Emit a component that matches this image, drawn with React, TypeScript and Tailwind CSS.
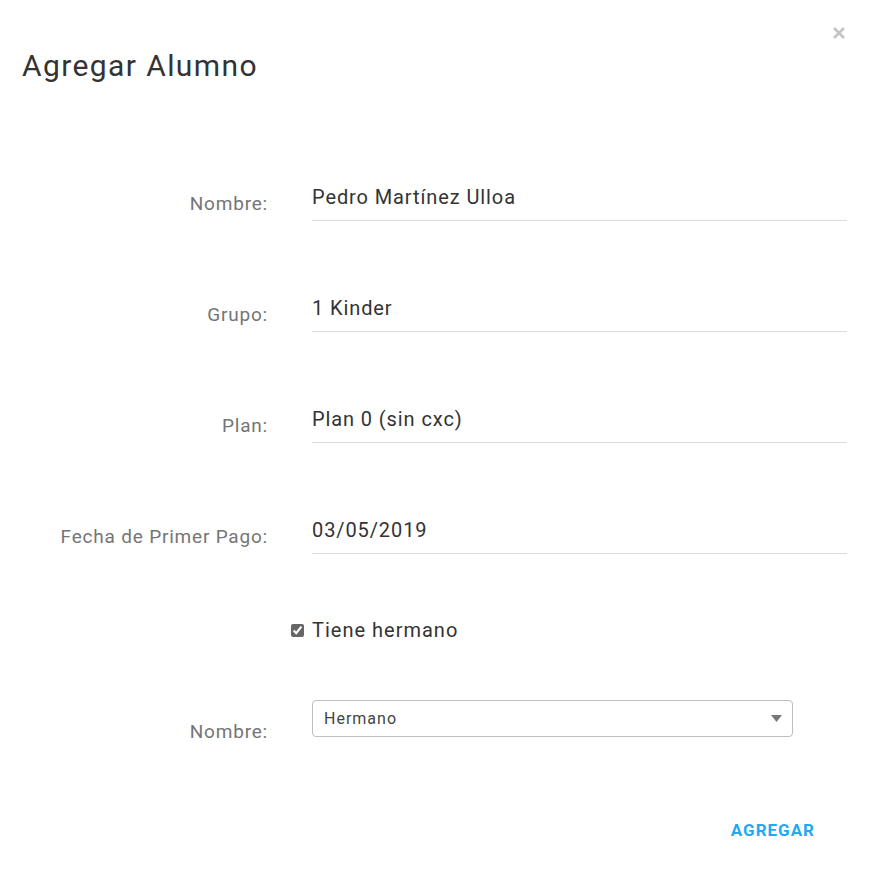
import React from 'react';

const fields = [
  { label: 'Nombre:', value: 'Pedro Martínez Ulloa' },
  { label: 'Grupo:', value: '1 Kinder' },
  { label: 'Plan:', value: 'Plan 0 (sin cxc)' },
  { label: 'Fecha de Primer Pago:', value: '03/05/2019' },
];

function Field({ label, value, first }: { label: string; value: string; first?: boolean }) {
  return (
    <div className={`flex ${first ? '' : 'mt-[64px]'}`}>
      <div className="w-[268px] shrink-0 pt-[18px] text-right text-[19px] leading-[24px] tracking-[0.8px] text-[#757575]">
        {label}
      </div>
      <div className="ml-[44px] flex-1 h-[47px] border-b border-[#dcdcdc] pt-[9px] text-[20px] leading-[28px] tracking-[0.9px] text-[#333]">
        {value}
      </div>
    </div>
  );
}

export default function App() {
  return (
    <div
      className="relative w-[873px] h-[869px] bg-white pr-[26px]"
      style={{ fontFamily: 'Roboto, "Liberation Sans", sans-serif' }}
    >
      {/* close */}
      <button className="absolute top-[26px] right-[27px] text-[#c4c4c4]">
        <svg width="14" height="14" viewBox="0 0 14 14">
          <path d="M2 2 L12 12 M12 2 L2 12" stroke="currentColor" strokeWidth="2.6" />
        </svg>
      </button>

      <h1 className="pl-[22px] pt-[46px] text-[30px] leading-[40px] tracking-[1.4px] text-[#333]">Agregar Alumno</h1>

      <div className="mt-[88px]">
        {fields.map((f, i) => (
          <Field key={i} label={f.label} value={f.value} first={i === 0} />
        ))}
      </div>

      <div className="mt-[62px] flex items-center pl-[291px] text-[20px] leading-[28px] tracking-[1px] text-[#333]">
        <input type="checkbox" defaultChecked className="w-[13px] h-[13px] mr-[8px] accent-[#666]" />
        <span>Tiene hermano</span>
      </div>

      <div className="mt-[56px] flex">
        <div className="w-[268px] shrink-0 pt-[20px] text-right text-[19px] leading-[24px] tracking-[0.8px] text-[#757575]">
          Nombre:
        </div>
        <div className="ml-[44px] w-[481px] h-[37px] flex items-center justify-between border border-[#bdbdbd] rounded-[4px] pl-[11px] pr-[10px] text-[16px] tracking-[1px] text-[#444]">
          <span>Hermano</span>
          <svg width="11" height="7" viewBox="0 0 11 7">
            <path d="M0 0 L11 0 L5.5 7 Z" fill="#777" />
          </svg>
        </div>
      </div>

      <div className="mt-[74px] flex justify-end pr-[32px]">
        <button className="text-[17px] leading-[24px] font-bold text-[#1eaaf1] tracking-[1px]">AGREGAR</button>
      </div>
    </div>
  );
}
